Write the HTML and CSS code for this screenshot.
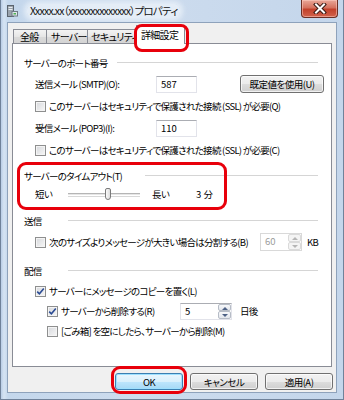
FILE: index.html
```html
<!DOCTYPE html>
<html lang="ja">
<head>
    <meta charset="UTF-8">
    <meta name="viewport" content="width=device-width, initial-scale=1.0">
    <title>プロパティ</title>
    <link rel="stylesheet" href="styles.css">
</head>
<body>

<div class="window">
    <div class="titlebar">
        <svg class="app-icon" width="12" height="12" viewBox="0 0 12 12">
            <rect x="1.5" y="0.5" width="6" height="11" fill="#9aa3ad" stroke="#5b646e"/>
            <rect x="2.5" y="2" width="4" height="1" fill="#e8ecef"/>
            <rect x="2.5" y="4" width="4" height="1" fill="#e8ecef"/>
            <rect x="6" y="6.5" width="5.5" height="4.5" fill="#dfe6ea" stroke="#6f7b86"/>
            <rect x="7.5" y="8" width="2.5" height="1.5" fill="#4caf50"/>
        </svg>
        <span class="title">Xxxxx.xx（xxxxxxxxxxxxxx）プロパティ</span>
        <div class="close-btn">
            <svg width="14" height="11" viewBox="0 0 14 11">
                <path d="M3 1.5 L11 9.5 M11 1.5 L3 9.5" stroke="#3a1a14" stroke-width="4" stroke-linecap="square"/>
                <path d="M3 1.5 L11 9.5 M11 1.5 L3 9.5" stroke="#fff" stroke-width="2" stroke-linecap="square"/>
            </svg>
        </div>
    </div>

    <div class="client">
        <div class="tabs">
            <div class="tab tab-general">全般</div>
            <div class="tab tab-server">サーバー</div>
            <div class="tab tab-security">セキュリティ</div>
            <div class="tab tab-advanced active">詳細設定<span class="ring ring-tab"></span></div>
        </div>

        <div class="panel">
            <div class="group">
                <div class="group-title"><span class="gt-port">サーバーのポート番号</span><i class="rule"></i></div>
                <div class="row">
                    <span class="field-label">送信メール (SMTP)(O):</span>
                    <span class="textbox">587</span>
                    <button class="btn btn-default-value">既定値を使用(U)</button>
                </div>
                <div class="row">
                    <label class="check"><span class="box"></span>このサーバーはセキュリティで保護された接続 (SSL) が必要(Q)</label>
                </div>
                <div class="row">
                    <span class="field-label">受信メール (POP3)(I):</span>
                    <span class="textbox">110</span>
                </div>
                <div class="row">
                    <label class="check"><span class="box"></span>このサーバーはセキュリティで保護された接続 (SSL) が必要(C)</label>
                </div>
            </div>

            <div class="group g-timeout">
                <span class="ring ring-timeout"></span>
                <div class="group-title"><span class="gt-timeout">サーバーのタイムアウト(T)</span><i class="rule"></i></div>
                <div class="row slider-row">
                    <span class="slider-short">短い</span>
                    <div class="track"><span class="thumb"></span></div>
                    <span class="slider-long">長い</span>
                    <span class="slider-value">3 分</span>
                </div>
            </div>

            <div class="group g-send">
                <div class="group-title"><span class="gt-short">送信</span><i class="rule"></i></div>
                <div class="row">
                    <label class="check check-split"><span class="box"></span>次のサイズよりメッセージが大きい場合は分割する(B)</label>
                    <span class="spin spin-size disabled"><span class="spin-value">60</span><span class="spin-buttons"><i class="up"></i><i class="down"></i></span></span>
                    <span class="unit">KB</span>
                </div>
            </div>

            <div class="group g-recv">
                <div class="group-title"><span class="gt-short">配信</span><i class="rule"></i></div>
                <div class="row">
                    <label class="check"><span class="box checked"><svg width="9" height="9" viewBox="0 0 9 9"><path d="M1.2 4.6 L3.4 6.8 L7.8 1.6" fill="none" stroke="#2b4c94" stroke-width="1.6"/></svg></span>サーバーにメッセージのコピーを置く(L)</label>
                </div>
                <div class="row sub">
                    <label class="check check-delete"><span class="box checked"><svg width="9" height="9" viewBox="0 0 9 9"><path d="M1.2 4.6 L3.4 6.8 L7.8 1.6" fill="none" stroke="#2b4c94" stroke-width="1.6"/></svg></span>サーバーから削除する(R)</label>
                    <span class="spin spin-days"><span class="spin-value">5</span><span class="spin-buttons"><i class="up"></i><i class="down"></i></span></span>
                    <span class="unit unit-days">日後</span>
                </div>
                <div class="row sub">
                    <label class="check"><span class="box"></span>[ごみ箱] を空にしたら、サーバーから削除(M)</label>
                </div>
            </div>
        </div>

        <div class="buttons">
            <button class="btn btn-ok">OK<span class="ring ring-ok"></span></button>
            <button class="btn">キャンセル</button>
            <button class="btn">適用(A)</button>
        </div>
    </div>
</div>

</body>
</html>
```

FILE: styles.css
```css
* {
    box-sizing: border-box;
}
body {
    margin: 0;
    font-family: "Noto Sans CJK JP", "Noto Sans", sans-serif;
    font-size: 9.5px;
    letter-spacing: -0.7px;
    font-feature-settings: "palt";
    color: #000;
}
.window {
    width: 344px;
    height: 400px;
    display: flex;
    flex-direction: column;
    border: 1px solid #70829a;
    border-top: none;
    background: linear-gradient(to right, #b9cde6 0, #d6e4f3 3px, #c4d7ec 7px, #cddcee 40%, #c4d6eb 100%);
}
.titlebar {
    height: 22px;
    display: flex;
    align-items: center;
    padding-left: 5px;
    flex-shrink: 0;
}
.app-icon {
    display: block;
    margin-top: -1px;
}
.title {
    margin-left: 9px;
    font-size: 10.5px;
    letter-spacing: -0.8px;
    line-height: 14px;
    margin-top: -1px;
    padding: 0 3px;
    border-radius: 6px;
    background: rgba(236, 243, 250, 0.75);
    box-shadow: 0 0 5px 3px rgba(236, 243, 250, 0.75);
    color: #111;
    white-space: nowrap;
}
.close-btn {
    margin-left: auto;
    margin-right: 5px;
    align-self: flex-start;
    width: 37px;
    height: 18px;
    border: 1px solid #6b2f25;
    border-top: none;
    border-radius: 0 0 4px 4px;
    background: linear-gradient(#e9a899 0, #d5725f 45%, #c2412b 55%, #d2634c 100%);
    box-shadow: inset 0 0 0 1px rgba(255, 210, 200, 0.5);
    display: flex;
    align-items: center;
    justify-content: center;
}
.close-btn svg {
    display: block;
}
.client {
    flex: 1;
    margin: 0 6px 6px 6px;
    border: 1px solid #8ea2bb;
    background: #f0f0f0;
    display: flex;
    flex-direction: column;
}
.tabs {
    height: 20px;
    display: flex;
    align-items: flex-end;
    padding-left: 5px;
    flex-shrink: 0;
}
.tab {
    position: relative;
    height: 14px;
    line-height: 13px;
    padding: 0 4px;
    border: 1px solid #898c95;
    border-bottom: none;
    margin-right: -1px;
    background: linear-gradient(#f3f3f3, #e6e6e6 50%, #dadada 51%, #d4d4d4);
    white-space: nowrap;
    font-size: 10px;
    letter-spacing: -0.7px;
}
.tab-general {
    width: 34px;
    padding-left: 6px;
}
.tab-server {
    width: 42px;
}
.tab-security {
    width: 51px;
    padding-left: 3px;
}
.tab.active {
    width: 49px;
    height: 19px;
    line-height: 17px;
    padding: 0 4px;
    margin-left: -1px;
    margin-bottom: -1px;
    background: #fff;
    z-index: 2;
}
.panel {
    margin: 0 4px;
    height: 324px;
    border: 1px solid #898c95;
    background: #fff;
    padding-top: 9px;
    flex-shrink: 0;
}
.group {
    position: relative;
}
.group-title {
    height: 20px;
    display: flex;
    align-items: center;
    padding: 0 13px 0 11px;
    white-space: nowrap;
}
.group-title span {
    flex-shrink: 0;
}
.gt-port {
    width: 93px;
}
.gt-timeout {
    width: 121px;
}
.gt-short {
    width: 44px;
}
.rule {
    flex: 1;
    height: 1px;
    margin-top: -1px;
    background: #d5d5d5;
}
.row {
    height: 22px;
    display: flex;
    align-items: center;
    padding-left: 22px;
    white-space: nowrap;
}
.g-timeout {
    margin-top: 5px;
}
.g-send {
    margin-top: 9px;
}
.g-recv {
    margin-top: 8px;
}
.g-recv .row {
    height: 20px;
}
.row.sub {
    padding-left: 34px;
}
.field-label {
    width: 121px;
}
.textbox {
    width: 41px;
    height: 17px;
    line-height: 15px;
    padding-left: 4px;
    border: 1px solid #e2e3ea;
    border-top-color: #abadb3;
    background: #fff;
    letter-spacing: 0;
}
.btn {
    position: relative;
    font-family: inherit;
    font-size: 9.5px;
    letter-spacing: -0.5px;
    font-feature-settings: "palt";
    color: #000;
    height: 18px;
    padding: 0;
    border: 1px solid #707070;
    border-radius: 3px;
    background: linear-gradient(#f2f2f2 0, #ebebeb 50%, #dddddd 51%, #cfcfcf 100%);
    box-shadow: inset 0 0 0 1px rgba(255, 255, 255, 0.7);
    line-height: 15px;
}
.btn-default-value {
    width: 84px;
    margin-left: 43px;
}
.check {
    display: flex;
    align-items: center;
}
.box {
    width: 11px;
    height: 11px;
    margin-right: 3px;
    border: 1px solid #8e8f8f;
    background: linear-gradient(135deg, #d6d8dc, #f7f7f7);
    box-shadow: inset 0 0 0 1px #f4f4f4;
    display: flex;
    align-items: center;
    justify-content: center;
    flex-shrink: 0;
}
.box svg {
    display: block;
}
.check-split {
    flex: 0 0 225px;
}
.check-delete {
    flex: 0 0 133px;
}
.slider-row {
    height: 16px;
}
.slider-short {
    flex: 0 0 33px;
}
.track {
    position: relative;
    flex: 0 0 72px;
    height: 3px;
    border-top: 1px solid #b5b5b5;
    border-bottom: 1px solid #fff;
    background: #e6e6e6;
    box-shadow: 0 1px 0 #d8d8d8;
}
.thumb {
    position: absolute;
    left: 37px;
    top: -6px;
    width: 6px;
    height: 12px;
    border: 1px solid #7a7a7a;
    border-radius: 2px 2px 3px 3px;
    background: linear-gradient(to right, #fafafa, #dcdcdc);
}
.slider-long {
    margin-left: 12px;
    flex: 0 0 44px;
}
.slider-value {
    letter-spacing: 0;
}
.spin {
    display: flex;
    height: 18px;
    border: 1px solid #e2e3ea;
    border-top-color: #abadb3;
    background: #fff;
    letter-spacing: 0;
}
.spin-size {
    flex: 0 0 42px;
}
.spin-days {
    flex: 0 0 52px;
    height: 17px;
}
.spin-value {
    flex: 1;
    padding-left: 4px;
    line-height: 15px;
}
.spin.disabled {
    border-color: #d9d9d9;
}
.spin.disabled .spin-value {
    color: #9c9c9c;
}
.spin-buttons {
    width: 13px;
    display: flex;
    flex-direction: column;
}
.spin-buttons i {
    flex: 1;
    position: relative;
    border: 1px solid #b6bcc6;
    border-radius: 2px;
    background: linear-gradient(#f7f8fa, #e2e6ec);
}
.spin-buttons i::after {
    content: "";
    position: absolute;
    left: 3px;
    top: 2px;
    border-left: 3px solid transparent;
    border-right: 3px solid transparent;
}
.spin-buttons .up::after {
    border-bottom: 3px solid #4d6185;
}
.spin-buttons .down::after {
    top: 2px;
    border-top: 3px solid #4d6185;
}
.spin.disabled .spin-buttons i {
    border-color: #dadada;
    background: #f4f4f4;
}
.spin.disabled .spin-buttons .up::after {
    border-bottom-color: #b5b5b5;
}
.spin.disabled .spin-buttons .down::after {
    border-top-color: #b5b5b5;
}
.unit {
    margin-left: 5px;
}
.unit-days {
    margin-left: 8px;
}
.buttons {
    display: flex;
    justify-content: flex-end;
    gap: 7px;
    margin-top: 6px;
    padding-right: 3px;
}
.buttons .btn {
    width: 68px;
    height: 17px;
    line-height: 14px;
}
.btn-ok {
    border-color: #3c7fb1;
    background: linear-gradient(#eaf6fd 0, #d9f0fc 50%, #bee6fd 51%, #a7d9f5 100%);
    box-shadow: inset 0 0 0 1px #9ee0ff;
}
.ring {
    position: absolute;
    border: 3px solid #e8000b;
    border-radius: 8px;
    pointer-events: none;
}
.ring-tab {
    left: -3px;
    right: -5px;
    top: -2px;
    bottom: -8px;
}
.ring-ok {
    left: -5px;
    right: -5px;
    top: -8px;
    bottom: -5px;
    border-radius: 9px;
}
.ring-timeout {
    left: 4px;
    top: -4px;
    width: 210px;
    height: 48px;
    border-radius: 9px;
}
```
